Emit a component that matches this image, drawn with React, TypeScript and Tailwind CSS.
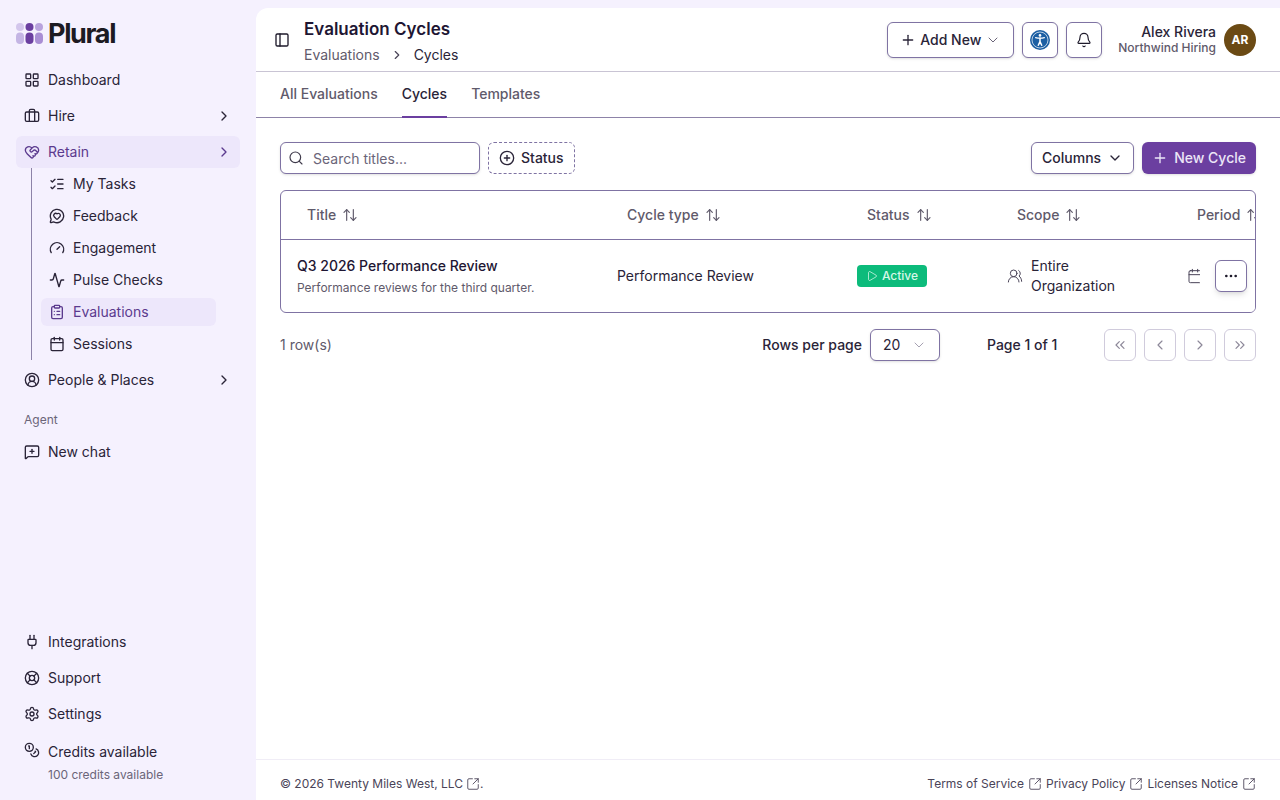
import {
  Activity,
  ArrowUpDown,
  Bell,
  Briefcase,
  Calendar,
  ChevronDown,
  ChevronLeft,
  ChevronRight,
  ChevronsLeft,
  ChevronsRight,
  CirclePlus,
  CircleUserRound,
  ClipboardList,
  Coins,
  Ellipsis,
  Gauge,
  HeartHandshake,
  LayoutGrid,
  LifeBuoy,
  ListChecks,
  MessageCircleHeart,
  MessageSquarePlus,
  PanelLeft,
  Play,
  Plug,
  Plus,
  Search,
  Settings,
  SquareArrowOutUpRight,
  UsersRound,
} from "lucide-react"
import type { LucideIcon } from "lucide-react"

function PluralLogo() {
  return (
    <svg width="27" height="21" viewBox="0 0 27 21" fill="none">
      <circle cx="4" cy="4" r="4" fill="#d3c6ec" />
      <circle cx="13.5" cy="4" r="4" fill="#6b3fa0" />
      <circle cx="23" cy="4" r="4" fill="#b9a3dd" />
      <rect x="0" y="9.5" width="8" height="11.5" rx="4" fill="#c4b5e4" />
      <rect x="9.5" y="9.5" width="8" height="11.5" rx="4" fill="#6b3fa0" />
      <rect x="19" y="9.5" width="8" height="11.5" rx="4" fill="#a98ed4" />
    </svg>
  )
}

function AccessibilityIcon() {
  return (
    <svg width="20" height="20" viewBox="0 0 20 20" fill="none">
      <circle cx="10" cy="10" r="10" fill="#1c5fa3" />
      <circle cx="10" cy="10" r="8" stroke="#ffffff" strokeWidth="0.7" />
      <circle cx="10" cy="5.4" r="1.3" fill="#ffffff" />
      <path d="M5.6 7.6c2.9 0.8 5.9 0.8 8.8 0" stroke="#ffffff" strokeWidth="1.2" strokeLinecap="round" />
      <path d="M10 8.2v3.6M10 11.6l-1.7 3.7M10 11.6l1.7 3.7" stroke="#ffffff" strokeWidth="1.5" strokeLinecap="round" />
    </svg>
  )
}

function NavItem({ icon: Icon, label, chevron, active }: { icon: LucideIcon; label: string; chevron?: boolean; active?: boolean }) {
  return (
    <div className={`flex h-8 items-center gap-2 rounded-md px-2 text-sm ${active ? "bg-[#ede7fb] text-[#5b3a8e]" : "text-[#2a2438]"}`}>
      <Icon className="size-4 shrink-0" strokeWidth={2} />
      <span className="flex-1">{label}</span>
      {chevron && <ChevronRight className="size-4" strokeWidth={2} />}
    </div>
  )
}

function SubItem({ icon: Icon, label, active }: { icon: LucideIcon; label: string; active?: boolean }) {
  return (
    <div className={`flex h-7 items-center gap-2 rounded-md px-2 text-sm ${active ? "bg-[#ede7fb] text-[#5b3a8e]" : "text-[#2a2438]"}`}>
      <Icon className="size-4 shrink-0" strokeWidth={2} />
      <span>{label}</span>
    </div>
  )
}

function Sidebar() {
  return (
    <aside className="flex h-full w-64 shrink-0 flex-col px-4 pb-[15px]">
      <div className="flex h-[50px] items-center gap-[5px] pt-4">
        <PluralLogo />
        <span className="pt-0.5 text-[27px] leading-[30px] font-bold tracking-[-0.05em] text-[#1c1a22]">Plural</span>
      </div>
      <nav className="mt-3.5 flex flex-col gap-1">
        <NavItem icon={LayoutGrid} label="Dashboard" />
        <NavItem icon={Briefcase} label="Hire" chevron />
        <NavItem icon={HeartHandshake} label="Retain" chevron active />
        <div className="-mt-1 ml-[15px] mr-6 flex flex-col gap-1 border-l border-[#8d83a8] py-0.5 pl-[9px]">
          <SubItem icon={ListChecks} label="My Tasks" />
          <SubItem icon={MessageCircleHeart} label="Feedback" />
          <SubItem icon={Gauge} label="Engagement" />
          <SubItem icon={Activity} label="Pulse Checks" />
          <SubItem icon={ClipboardList} label="Evaluations" active />
          <SubItem icon={Calendar} label="Sessions" />
        </div>
        <NavItem icon={CircleUserRound} label="People & Places" chevron />
      </nav>
      <div className="mt-4 px-2 text-xs leading-4 text-[#6b6579]">Agent</div>
      <div className="mt-2">
        <NavItem icon={MessageSquarePlus} label="New chat" />
      </div>
      <div className="mt-auto flex flex-col gap-1">
        <NavItem icon={Plug} label="Integrations" />
        <NavItem icon={LifeBuoy} label="Support" />
        <NavItem icon={Settings} label="Settings" />
        <div className="px-2 pt-2">
          <div className="flex items-center gap-2 text-sm leading-5 text-[#2a2438]">
            <Coins className="-mt-1 size-4 shrink-0" strokeWidth={2} />
            <span>Credits available</span>
          </div>
          <div className="mt-[3px] pl-6 text-xs leading-5 text-[#6b6579]">100 credits available</div>
        </div>
      </div>
    </aside>
  )
}

function Header() {
  return (
    <header className="flex h-16 shrink-0 items-center border-b border-[#c9c4d4] pl-[18px] pr-6">
      <PanelLeft className="size-4 text-[#1e1a2b]" strokeWidth={2} />
      <div className="ml-[14px] pt-0.5">
        <div className="text-[17px] leading-6 font-semibold text-[#1e1633]">Evaluation Cycles</div>
        <div className="mt-1 flex items-center text-sm leading-5">
          <span className="text-[#5f5a6b]">Evaluations</span>
          <ChevronRight className="mx-2.5 size-3.5 text-[#4a4458]" strokeWidth={2} />
          <span className="text-[#2a2438]">Cycles</span>
        </div>
      </div>
      <div className="ml-auto flex items-center">
        <div className="flex h-9 w-[127px] items-center justify-center gap-1 rounded-md border border-[#7f73a3] bg-white text-sm font-medium text-[#2a2438] shadow-sm">
          <Plus className="size-4" strokeWidth={2} />
          <span>Add New</span>
          <ChevronDown className="size-4 text-[#6b6579]" strokeWidth={1.5} />
        </div>
        <div className="ml-2 flex size-9 items-center justify-center rounded-md border border-[#7f73a3] bg-white shadow-sm">
          <AccessibilityIcon />
        </div>
        <div className="ml-2 flex size-9 items-center justify-center rounded-md border border-[#7f73a3] bg-white shadow-sm">
          <Bell className="size-4 text-[#1e1a2b]" strokeWidth={1.75} />
        </div>
        <div className="ml-4 text-right">
          <div className="text-sm leading-4 font-medium text-[#2a2438]">Alex Rivera</div>
          <div className="text-xs leading-4 font-medium text-[#5f5a6b]">Northwind Hiring</div>
        </div>
        <div className="ml-2 flex size-8 items-center justify-center rounded-full bg-[#6b4a14] text-xs font-bold text-white">AR</div>
      </div>
    </header>
  )
}

function Tabs() {
  return (
    <div className="flex h-[46px] shrink-0 gap-6 border-b border-[#8d83a8] px-6 text-sm font-medium">
      <div className="-mb-px flex items-center border-b-2 border-transparent text-[#5f5a6b]">All Evaluations</div>
      <div className="-mb-px flex items-center border-b-2 border-[#6b3fa0] text-[#2a2438]">Cycles</div>
      <div className="-mb-px flex items-center border-b-2 border-transparent text-[#5f5a6b]">Templates</div>
    </div>
  )
}

function Toolbar() {
  return (
    <div className="flex items-center">
      <div className="flex h-8 w-[200px] items-center gap-[9px] rounded-md border border-[#7f73a3] bg-white pl-[7px] pr-2 shadow-sm">
        <Search className="size-4 text-[#3f3a4b]" strokeWidth={1.75} />
        <span className="pt-0.5 text-sm text-[#6b6579]">Search titles...</span>
      </div>
      <div className="ml-2 flex h-8 items-center gap-1.5 rounded-md border border-dashed border-[#7f73a3] px-2.5 text-sm font-medium text-[#2a2438]">
        <CirclePlus className="size-4" strokeWidth={2} />
        <span>Status</span>
      </div>
      <div className="ml-auto flex h-8 items-center gap-1.5 rounded-md border border-[#7f73a3] bg-white px-2.5 text-sm font-medium text-[#2a2438] shadow-sm">
        <span>Columns</span>
        <ChevronDown className="size-4" strokeWidth={2} />
      </div>
      <div className="ml-2 flex h-8 items-center gap-1.5 rounded-md bg-[#6b3fa0] px-2.5 text-sm font-medium text-[#ece6f7] shadow-sm">
        <Plus className="size-4" strokeWidth={2} />
        <span>New Cycle</span>
      </div>
    </div>
  )
}

function HeadCell({ label, width }: { label: string; width: string }) {
  return (
    <div className={`flex shrink-0 items-center gap-1.5 pl-[26px] text-sm font-medium text-[#5f5a6b] ${width}`}>
      <span>{label}</span>
      <ArrowUpDown className="size-4" strokeWidth={1.75} />
    </div>
  )
}

function CycleTable() {
  return (
    <div className="relative mt-4 overflow-hidden rounded-md border border-[#7f73a3]">
      <div className="flex h-[49px] border-b border-[#7f73a3]">
        <HeadCell label="Title" width="w-[320px]" />
        <HeadCell label="Cycle type" width="w-[240px]" />
        <HeadCell label="Status" width="w-[150px]" />
        <HeadCell label="Scope" width="w-[180px]" />
        <HeadCell label="Period" width="w-[180px]" />
      </div>
      <div className="flex h-[72px] items-center text-sm text-[#2a2438]">
        <div className="w-[320px] shrink-0 px-4">
          <div className="leading-5 font-medium text-[#1e1633]">Q3 2026 Performance Review</div>
          <div className="mt-1 text-xs leading-4 text-[#5f5a6b]">Performance reviews for the third quarter.</div>
        </div>
        <div className="w-[240px] shrink-0 px-4">Performance Review</div>
        <div className="w-[150px] shrink-0 px-4">
          <div className="flex h-[22px] w-[70px] items-center justify-center gap-1 rounded bg-[#0cbb7b] text-xs font-medium text-[#d7f7e8]">
            <Play className="size-3" strokeWidth={1.5} />
            <span>Active</span>
          </div>
        </div>
        <div className="flex w-[180px] shrink-0 items-center gap-2 pl-4 pr-10">
          <UsersRound className="size-4 shrink-0 text-[#4a4458]" strokeWidth={1.5} />
          <span className="leading-5">Entire Organization</span>
        </div>
        <div className="w-[180px] shrink-0 px-4">
          <Calendar className="size-4 text-[#4a4458]" strokeWidth={1.5} />
        </div>
      </div>
      <div className="absolute right-0 bottom-0 flex h-[72px] w-[55px] items-center justify-end bg-white pr-2">
        <div className="flex size-8 items-center justify-center rounded-md border border-[#7f73a3] bg-white text-[#1e1a2b] shadow-md">
          <Ellipsis className="size-4" strokeWidth={2} />
        </div>
      </div>
    </div>
  )
}

function PageButton({ icon: Icon }: { icon: LucideIcon }) {
  return (
    <div className="flex size-8 items-center justify-center rounded-md border border-[#d0cbdc] bg-white text-[#8d8899]">
      <Icon className="size-4" strokeWidth={1.75} />
    </div>
  )
}

function Pagination() {
  return (
    <div className="mt-4 flex items-center text-sm">
      <span className="text-[#5f5a6b]">1 row(s)</span>
      <div className="ml-auto flex items-center gap-2">
        <span className="font-medium text-[#2a2438]">Rows per page</span>
        <div className="flex h-8 w-[70px] items-center justify-between rounded-md border border-[#7f73a3] bg-white pl-3 pr-3 text-[#2a2438] shadow-sm">
          <span>20</span>
          <ChevronDown className="size-4 text-[#a6a1b2]" strokeWidth={1.5} />
        </div>
      </div>
      <span className="ml-[47px] w-[117px] font-medium text-[#2a2438]">Page 1 of 1</span>
      <div className="flex gap-2">
        <PageButton icon={ChevronsLeft} />
        <PageButton icon={ChevronLeft} />
        <PageButton icon={ChevronRight} />
        <PageButton icon={ChevronsRight} />
      </div>
    </div>
  )
}

function Footer() {
  return (
    <footer className="flex h-[41px] shrink-0 items-center border-t border-[#f0edf6] px-6 pt-2 text-xs text-[#4a4458]">
      <span>© 2026 Twenty Miles West, LLC</span>
      <SquareArrowOutUpRight className="ml-[3px] size-3.5" strokeWidth={1.5} />
      <span>.</span>
      <div className="ml-auto flex items-center gap-1">
        <span className="flex items-center gap-1">Terms of Service <SquareArrowOutUpRight className="size-3.5" strokeWidth={1.5} /></span>
        <span className="flex items-center gap-1">Privacy Policy <SquareArrowOutUpRight className="size-3.5" strokeWidth={1.5} /></span>
        <span className="flex items-center gap-1">Licenses Notice <SquareArrowOutUpRight className="size-3.5" strokeWidth={1.5} /></span>
      </div>
    </footer>
  )
}

export default function App() {
  return (
    <div className="flex h-screen overflow-hidden bg-[#f5f1fe] font-['Inter',sans-serif]">
      <Sidebar />
      <div className="mt-2 flex min-w-0 flex-1 flex-col rounded-tl-xl bg-white">
        <Header />
        <Tabs />
        <main className="flex-1 px-6 pt-6">
          <Toolbar />
          <CycleTable />
          <Pagination />
        </main>
        <Footer />
      </div>
    </div>
  )
}
